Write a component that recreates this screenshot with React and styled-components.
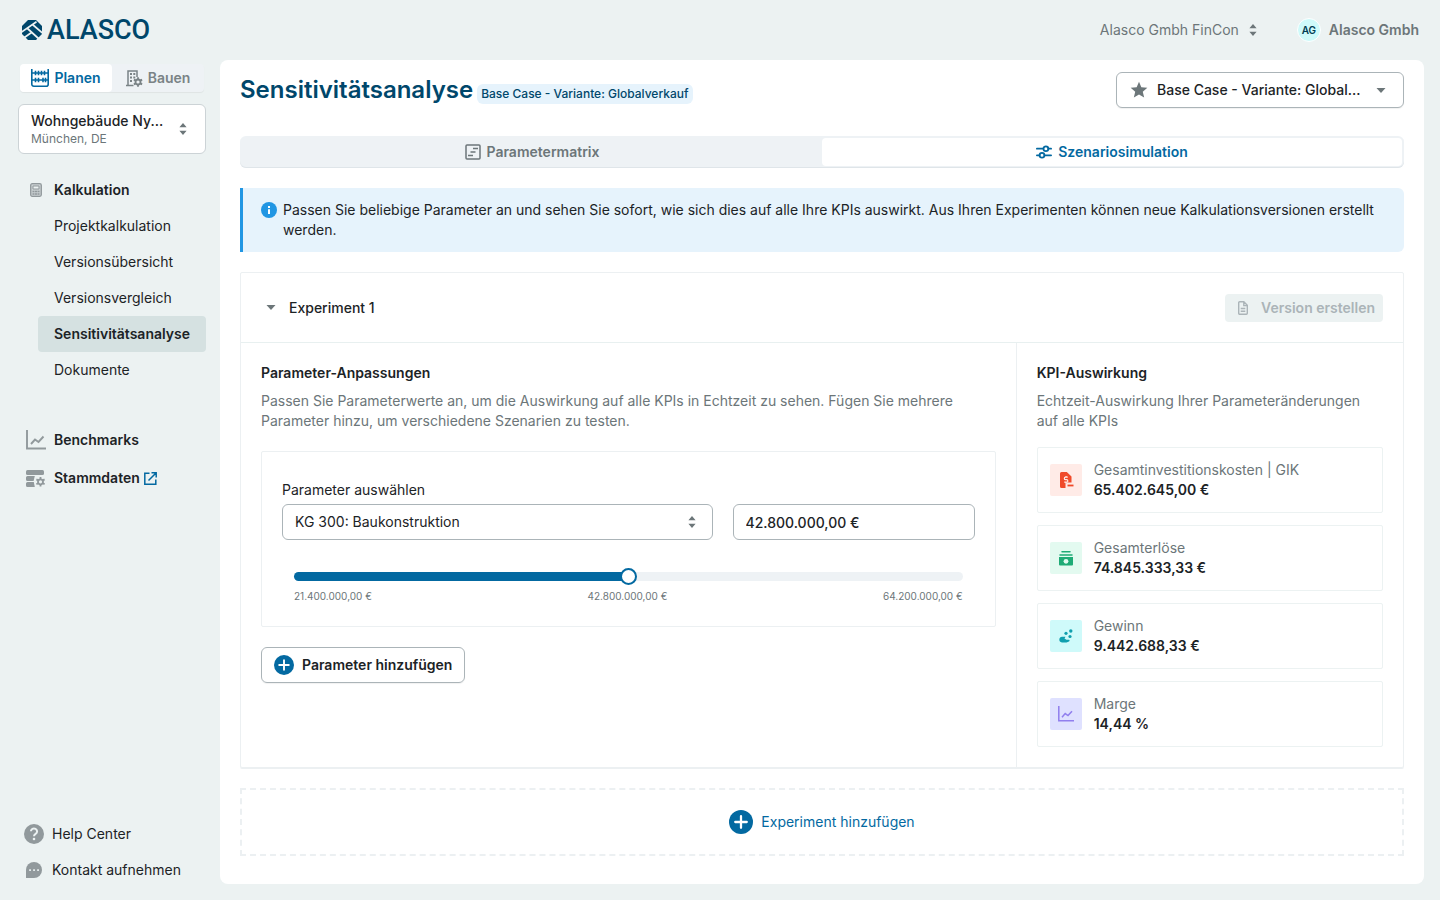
import { useState } from "react";
import styled, { createGlobalStyle } from "styled-components";
import { MdStar } from "react-icons/md";

const GlobalStyle = createGlobalStyle`
  * {
    box-sizing: border-box;
  }

  body {
    margin: 0;
    background: #ecf2f2;
    color: #1c2326;
    font-family: Inter, sans-serif;
    font-size: 14px;
    line-height: 20px;
  }

  button,
  input,
  select {
    font: inherit;
    color: inherit;
  }

  h1,
  h2,
  p,
  ul,
  dl,
  dd {
    margin: 0;
    padding: 0;
  }

  svg {
    display: block;
    flex-shrink: 0;
  }
`;

/* ---------- icons ---------- */

const LogoMark = () => (
  <svg width="20" height="20" viewBox="0 0 20 20" aria-hidden="true">
    <path d="M6 0h8l6 6v8l-6 6H6l-6-6V6z" fill="#00476b" />
    <path
      d="M-1 12.500L14.500 1.700M10.500 4.500L21 13.500M5.500 8.500L17 19M1 18.500L9.500 12.500"
      stroke="#ecf2f2"
      strokeWidth="1.700"
      fill="none"
    />
  </svg>
);

const AbacusIcon = () => (
  <svg width="18" height="18" viewBox="0 0 18 18" fill="none" stroke="currentColor" strokeWidth="1.600" aria-hidden="true">
    <path d="M.8 0v15.200a2 2 0 0 0 2 2h12.400a2 2 0 0 0 2-2V0M.8 4h16.400M.8 11h16.400" />
    <path d="M4.500 1.700v4.600M7.500 1.700v4.600M10.500 1.700v4.600M13.500 1.700v4.600M4.500 8.700v4.600M7.500 8.700v4.600M12 8.700v4.600M14.500 8.700v4.600" />
  </svg>
);

const Gear = ({ x, y }) => (
  <g transform={`translate(${x} ${y})`}>
    <circle r="2.500" fill="none" stroke="currentColor" strokeWidth="1.800" />
    <path
      d="M0-4.700v2M0 4.700v-2M-4.100-2.400l1.800 1M4.100 2.400l-1.800-1M-4.100 2.400l1.800-1M4.100-2.400l-1.800 1"
      stroke="currentColor"
      strokeWidth="1.800"
    />
  </g>
);

const BuildingIcon = () => (
  <svg width="17" height="17" viewBox="0 0 17 17" aria-hidden="true">
    <path d="M2 16V1h9v6M0 15.500h7.500" fill="none" stroke="currentColor" strokeWidth="1.500" />
    <path d="M4 3h2v2H4zM7.300 3h2v2h-2zM4 6.500h2v2H4zM7.300 6.500h2v2h-2zM4 10h2v2H4z" fill="currentColor" />
    <Gear x="12" y="12" />
  </svg>
);

const CalculatorIcon = () => (
  <svg width="12" height="14" viewBox="0 0 12 14" aria-hidden="true">
    <rect x=".7" y=".7" width="10.600" height="12.600" rx="1.500" fill="#c9cfd1" stroke="#91999c" strokeWidth="1.300" />
    <path d="M3 3h6v3H3z" fill="#ecf2f2" stroke="#91999c" />
    <path d="M2.500 8.500h2M5 8.500h2M7.500 8.500h2M2.500 11h2M5 11h2M7.500 11h2" stroke="#91999c" strokeWidth="1.300" />
  </svg>
);

const ChartIcon = ({ size }) => (
  <svg width={size} height={size} viewBox="0 0 20 20" fill="none" stroke="currentColor" strokeWidth="1.900" aria-hidden="true">
    <path d="M1 0v18.500h19" />
    <path d="M5 14l4-4.500 3.500 2.500 5-5.500" />
  </svg>
);

const MasterDataIcon = () => (
  <svg width="20" height="17" viewBox="0 0 20 17" aria-hidden="true">
    <rect width="18" height="5" rx="1.500" fill="currentColor" />
    <path d="M1.500 6h7.300l-1.200 5H1.500A1.500 1.500 0 0 1 0 9.500v-2A1.500 1.500 0 0 1 1.500 6zM1.500 12h6.300l1 5H1.500A1.500 1.500 0 0 1 0 15.500v-2A1.500 1.500 0 0 1 1.500 12z" fill="currentColor" />
    <Gear x="14.500" y="11.800" />
  </svg>
);

const ExternalIcon = () => (
  <svg width="13" height="13" viewBox="0 0 13 13" fill="none" stroke="#0369a1" strokeWidth="1.500" aria-hidden="true">
    <path d="M5.500 1.200H.8v11h11V7.500M7.500.8h4.700v4.700M12 1L4.500 8.500" />
  </svg>
);

const HelpIconDisc = () => (
  <svg width="20" height="20" viewBox="0 0 20 20" aria-hidden="true">
    <circle cx="10" cy="10" r="10" fill="currentColor" />
    <path d="M6.900 7.300a3.100 2.900 0 1 1 4.700 2.500c-1.200.8-1.600 1.200-1.600 2.500" fill="none" stroke="#ecf2f2" strokeWidth="2" />
    <circle cx="10" cy="15" r="1.300" fill="#ecf2f2" />
  </svg>
);

const InfoIcon = () => (
  <svg width="16" height="16" viewBox="0 0 16 16" aria-hidden="true">
    <circle cx="8" cy="8" r="8" fill="#2196e3" />
    <path d="M7 4h2v2H7zM7 7.300h2V12H7z" fill="#fff" />
  </svg>
);

const ChatIcon = () => (
  <svg width="16" height="16" viewBox="0 0 16 16" aria-hidden="true">
    <path d="M8 0a8 8 0 1 1 0 16H0V8a8 8 0 0 1 8-8z" fill="currentColor" />
    <path d="M3.200 7.200h1.700v1.700H3.200zM7.200 7.200h1.700v1.700H7.200zM11.200 7.200h1.700v1.700h-1.700z" fill="#ecf2f2" />
  </svg>
);

const SortIcon = () => (
  <svg width="8" height="12" viewBox="0 0 8 12" fill="#6c7679" aria-hidden="true">
    <path d="M4 0l3.600 4.200H.4zM4 12l3.600-4.200H.4z" />
  </svg>
);

const CaretIcon = () => (
  <svg width="10" height="5" viewBox="0 0 10 5" fill="#6c7679" aria-hidden="true">
    <path d="M.5 0h9L5 5z" />
  </svg>
);

const MatrixIcon = () => (
  <svg width="16" height="16" viewBox="0 0 16 16" fill="none" stroke="currentColor" aria-hidden="true">
    <rect x="1" y="1" width="14" height="14" rx="1" strokeWidth="1.500" />
    <path d="M8 4.500h5M5.500 8h5M3 11.500h5" strokeWidth="1.500" />
  </svg>
);

const SlidersIcon = () => (
  <svg width="16" height="14" viewBox="0 0 16 14" fill="none" stroke="currentColor" strokeWidth="1.800" strokeLinecap="round" aria-hidden="true">
    <path d="M.9 3.700h6.100M12.400 3.700h2.700M.9 10.300h2.500M8.600 10.300h6.500" />
    <circle cx="9.900" cy="3.700" r="2.400" />
    <circle cx="6" cy="10.300" r="2.400" />
  </svg>
);

const FileIcon = () => (
  <svg width="10" height="14" viewBox="0 0 10 14" fill="none" stroke="currentColor" strokeWidth="1.400" aria-hidden="true">
    <path d="M.7 1.700a1 1 0 0 1 1-1h4.100l3.500 3.600v8a1 1 0 0 1-1 1H1.700a1 1 0 0 1-1-1zM5.800 1v3.600h3.500M2.700 7.500h4.600M2.700 10.300h4.600" />
  </svg>
);

const PlusIcon = ({ size }) => (
  <svg width={size} height={size} viewBox="0 0 20 20" aria-hidden="true">
    <circle cx="10" cy="10" r="10" fill="#0369a1" />
    <path d="M10 5.200v9.600M5.200 10h9.600" stroke="#fff" strokeWidth="1.900" strokeLinecap="round" />
  </svg>
);

const CostIcon = () => (
  <svg width="16" height="16" viewBox="0 0 16 16" aria-hidden="true">
    <path d="M3.500 0h5.300L13.500 4.500v6H9.500L7.500 12v4h-4A1.500 1.500 0 0 1 2 14.500v-13A1.500 1.500 0 0 1 3.500 0z" fill="currentColor" />
    <path d="M9.800 5.200H7.600a1.200 1.200 0 0 0 0 2.500h1a1.200 1.200 0 0 1 0 2.500H6.200M8 4v1.200M8 10.200v1.500" fill="none" stroke="#ffebe7" strokeWidth="1.200" />
    <path d="M9.500 13.500h6" stroke="currentColor" strokeWidth="1.800" />
  </svg>
);

const CashIcon = () => (
  <svg width="16" height="16" viewBox="0 0 16 16" aria-hidden="true">
    <path d="M4 1.700h8M2 5h12" stroke="currentColor" strokeWidth="1.500" strokeLinecap="round" />
    <path d="M1 7h14v7.500a1 1 0 0 1-1 1H2a1 1 0 0 1-1-1z" fill="currentColor" />
    <circle cx="8" cy="11.300" r="2.400" fill="#e3faf0" />
  </svg>
);

const ProfitIcon = () => (
  <svg width="16" height="16" viewBox="0 0 16 16" fill="currentColor" aria-hidden="true">
    <circle cx="8" cy="5.300" r="1.600" />
    <circle cx="12.800" cy="3" r="1.700" />
    <circle cx="12" cy="8.500" r="1.600" />
    <path d="M4.500 8.700h3l-1 1.800 2 1.200h2.500c.8 0 .8 1.500 0 1.700L8.500 14.500H4a2.900 2.900 0 0 1 .5-5.800z" />
  </svg>
);

/* ---------- data ---------- */

const subPages = [
  "Projektkalkulation",
  "Versionsübersicht",
  "Versionsvergleich",
  "Sensitivitätsanalyse",
  "Dokumente",
];

const kpis = [
  { label: "Gesamtinvestitionskosten | GIK", value: "65.402.645,00 €", icon: <CostIcon />, bg: "#ffebe7", fg: "#f04a2a" },
  { label: "Gesamterlöse", value: "74.845.333,33 €", icon: <CashIcon />, bg: "#e3faf0", fg: "#1fab76" },
  { label: "Gewinn", value: "9.442.688,33 €", icon: <ProfitIcon />, bg: "#cffafa", fg: "#0f9fae" },
  { label: "Marge", value: "14,44 %", icon: <ChartIcon size={16} />, bg: "#dfe1ff", fg: "#917fee" },
];

const formatEuro = (n) =>
  n.toString().replace(/\B(?=(\d{3})+(?!\d))/g, ".") + ",00 €";

const MIN = 21400000;
const MAX = 64200000;

const App = () => {
  const [amount, setAmount] = useState(42800000);
  const filled = ((amount - MIN) / (MAX - MIN)) * 100;

  return (
    <>
      <GlobalStyle />
      <Page>
        <TopBar>
          <Logo href="#">
            <LogoMark />
            <span>ALASCO</span>
          </Logo>
          <Account>
            <CompanyButton type="button">
              Alasco Gmbh FinCon
              <SortIcon />
            </CompanyButton>
            <UserButton type="button">
              <Avatar>AG</Avatar>
              Alasco Gmbh
            </UserButton>
          </Account>
        </TopBar>

        <Body>
          <Sidebar>
            <ModeSwitch>
              <ModeButton type="button" $active>
                <AbacusIcon />
                Planen
              </ModeButton>
              <ModeButton type="button">
                <BuildingIcon />
                Bauen
              </ModeButton>
            </ModeSwitch>
            <ProjectButton type="button">
              <ProjectText>
                <ProjectName>Wohngebäude Ny...</ProjectName>
                <ProjectPlace>München, DE</ProjectPlace>
              </ProjectText>
              <SortIcon />
            </ProjectButton>

            <Nav>
              <NavItem href="#" $bold>
                <NavIcon>
                  <CalculatorIcon />
                </NavIcon>
                Kalkulation
              </NavItem>
              {subPages.map((page) => (
                <SubItem href="#" key={page} $active={page === "Sensitivitätsanalyse"}>
                  {page}
                </SubItem>
              ))}
            </Nav>
            <LowerNav>
              <NavItem href="#" $bold>
                <NavIcon>
                  <ChartIcon size={20} />
                </NavIcon>
                Benchmarks
              </NavItem>
              <NavItem href="#" $bold>
                <NavIcon>
                  <MasterDataIcon />
                </NavIcon>
                Stammdaten
                <ExternalIcon />
              </NavItem>
            </LowerNav>

            <HelpNav>
              <HelpItem href="#">
                <HelpIcon>
                  <HelpIconDisc />
                </HelpIcon>
                Help Center
              </HelpItem>
              <HelpItem href="#">
                <HelpIcon>
                  <ChatIcon />
                </HelpIcon>
                Kontakt aufnehmen
              </HelpItem>
            </HelpNav>
          </Sidebar>

          <Main>
            <TitleRow>
              <Title>Sensitivitätsanalyse</Title>
              <Badge>Base Case - Variante: Globalverkauf</Badge>
              <VersionButton type="button">
                <MdStar size={20} color="#6c7679" />
                <span>Base Case - Variante: Global...</span>
                <CaretIcon />
              </VersionButton>
            </TitleRow>

            <Tabs>
              <Tab type="button">
                <MatrixIcon />
                Parametermatrix
              </Tab>
              <Tab type="button" $active>
                <SlidersIcon />
                Szenariosimulation
              </Tab>
            </Tabs>

            <Notice>
              <InfoIcon />
              <p>
                Passen Sie beliebige Parameter an und sehen Sie sofort, wie sich
                dies auf alle Ihre KPIs auswirkt. Aus Ihren Experimenten können
                neue Kalkulationsversionen erstellt werden.
              </p>
            </Notice>

            <Experiment>
              <ExperimentHeader>
                <ExperimentToggle type="button">
                  <CaretIcon />
                  Experiment 1
                </ExperimentToggle>
                <CreateButton type="button" disabled>
                  <FileIcon />
                  Version erstellen
                </CreateButton>
              </ExperimentHeader>
              <ExperimentBody>
                <ParameterPane>
                  <PaneTitle>Parameter-Anpassungen</PaneTitle>
                  <PaneText>
                    Passen Sie Parameterwerte an, um die Auswirkung auf alle
                    KPIs in Echtzeit zu sehen. Fügen Sie mehrere Parameter
                    hinzu, um verschiedene Szenarien zu testen.
                  </PaneText>
                  <ParameterCard>
                    <label htmlFor="parameter">Parameter auswählen</label>
                    <Fields>
                      <SelectBox>
                        <Select id="parameter">
                          <option>KG 300: Baukonstruktion</option>
                        </Select>
                        <SortIcon />
                      </SelectBox>
                      <AmountInput
                        aria-label="Parameterwert"
                        value={formatEuro(amount)}
                        readOnly
                      />
                    </Fields>
                    <SliderArea>
                      <Slider
                        type="range"
                        aria-label="Wert anpassen"
                        min={MIN}
                        max={MAX}
                        step={100000}
                        value={amount}
                        onChange={(e) => setAmount(Number(e.target.value))}
                        style={{ "--filled": `${filled}%` }}
                      />
                      <Scale>
                        <span>{formatEuro(MIN)}</span>
                        <span>{formatEuro((MIN + MAX) / 2)}</span>
                        <span>{formatEuro(MAX)}</span>
                      </Scale>
                    </SliderArea>
                  </ParameterCard>
                  <AddParameter type="button">
                    <PlusIcon size={20} />
                    Parameter hinzufügen
                  </AddParameter>
                </ParameterPane>

                <KpiPane>
                  <PaneTitle>KPI-Auswirkung</PaneTitle>
                  <PaneText>
                    Echtzeit-Auswirkung Ihrer Parameteränderungen auf alle KPIs
                  </PaneText>
                  <KpiList>
                    {kpis.map((kpi) => (
                      <KpiCard key={kpi.label}>
                        <KpiIcon $bg={kpi.bg} $fg={kpi.fg}>
                          {kpi.icon}
                        </KpiIcon>
                        <div>
                          <KpiLabel>{kpi.label}</KpiLabel>
                          <KpiValue>{kpi.value}</KpiValue>
                        </div>
                      </KpiCard>
                    ))}
                  </KpiList>
                </KpiPane>
              </ExperimentBody>
            </Experiment>

            <AddExperiment type="button">
              <PlusIcon size={24} />
              Experiment hinzufügen
            </AddExperiment>
          </Main>
        </Body>
      </Page>
    </>
  );
};

export default App;

/* ---------- styles ---------- */

const Page = styled.div`
  display: flex;
  flex-direction: column;
  min-height: 100vh;
`;

const TopBar = styled.header`
  display: flex;
  align-items: center;
  justify-content: space-between;
  height: 60px;
  padding: 0 21px 0 22px;
`;

const Logo = styled.a`
  display: flex;
  align-items: center;
  gap: 5px;
  color: #00476b;
  font-family: Roboto, sans-serif;
  font-size: 27px;
  font-weight: 500;
  line-height: 32px;
  text-decoration: none;
`;

const Account = styled.div`
  display: flex;
  align-items: center;
  gap: 40px;
  color: #6c7679;
`;

const PlainButton = styled.button`
  display: flex;
  align-items: center;
  padding: 0;
  border: none;
  background: none;
  cursor: pointer;
`;

const CompanyButton = styled(PlainButton)`
  gap: 10px;
`;

const UserButton = styled(PlainButton)`
  gap: 8px;
  font-weight: 600;
`;

const Avatar = styled.span`
  display: flex;
  align-items: center;
  justify-content: center;
  width: 24px;
  height: 24px;
  border: 1px solid #fff;
  border-radius: 50%;
  background: #cffafa;
  color: #003d52;
  font-size: 10px;
`;

const Body = styled.div`
  display: flex;
  flex: 1;
  padding: 0 16px 16px 0;
`;

const Sidebar = styled.aside`
  display: flex;
  flex-direction: column;
  width: 220px;
  padding: 4px 14px 0 18px;
`;

const ModeSwitch = styled.div`
  display: flex;
  margin: 0 2px;
  border-radius: 4px;
  background: #eef2f5;
  box-shadow: 0 1px 1px #0000000f;
`;

const ModeButton = styled(PlainButton)`
  flex: 1;
  justify-content: center;
  gap: 5px;
  height: 28px;
  border-radius: 4px;
  background: ${(props) => (props.$active ? "#fff" : "transparent")};
  color: ${(props) => (props.$active ? "#0369a1" : "#7a8386")};
  font-weight: 600;
`;

const ProjectButton = styled(PlainButton)`
  justify-content: space-between;
  gap: 12px;
  height: 50px;
  margin-top: 12px;
  padding: 0 18px 0 12px;
  border: 1px solid #ccd3d6;
  border-radius: 6px;
  background: #fff;
  text-align: left;
`;

const ProjectText = styled.span`
  flex: 1;
`;

const ProjectName = styled.span`
  display: block;
  font-weight: 500;
  line-height: 20px;
  white-space: nowrap;
`;

const ProjectPlace = styled.span`
  display: block;
  color: #6c7679;
  font-size: 12px;
  line-height: 16px;
`;

const Nav = styled.nav`
  display: flex;
  flex-direction: column;
  margin-top: 18px;
`;

const LowerNav = styled(Nav)`
  gap: 2px;
  margin-top: 34px;
`;

const NavItem = styled.a`
  display: flex;
  align-items: center;
  height: 36px;
  color: inherit;
  font-weight: ${(props) => (props.$bold ? 600 : 400)};
  text-decoration: none;

  > svg {
    margin-left: 4px;
  }
`;

const NavIcon = styled.span`
  display: flex;
  justify-content: center;
  width: 36px;
  color: #91999c;
`;

const SubItem = styled(NavItem)`
  margin-left: 20px;
  padding-left: 16px;
  border-radius: 4px;
  background: ${(props) => (props.$active ? "#d5e1e1" : "transparent")};
  font-weight: ${(props) => (props.$active ? 600 : 400)};
`;

const HelpNav = styled(Nav)`
  margin-top: auto;
  margin-bottom: -4px;
`;

const HelpItem = styled(NavItem)`
  gap: 2px;
`;

const HelpIcon = styled(NavIcon)`
  width: 32px;
`;

const Main = styled.main`
  flex: 1;
  min-width: 0;
  padding: 12px 20px 28px;
  border-radius: 8px;
  background: #fff;
`;

const TitleRow = styled.div`
  display: flex;
  align-items: center;
  gap: 4px;
`;

const Title = styled.h1`
  color: #00476b;
  font-size: 24px;
  font-weight: 600;
  line-height: 36px;
`;

const Badge = styled.span`
  margin-top: 8px;
  padding: 0 4px;
  border-radius: 6px;
  background: #e6f3fc;
  color: #00476b;
  font-size: 12px;
  font-weight: 500;
`;

const VersionButton = styled(PlainButton)`
  gap: 8px;
  width: 288px;
  height: 36px;
  margin-left: auto;
  padding: 0 17px 0 12px;
  border: 1px solid #abb4b8;
  border-radius: 6px;
  background: #fff;
  box-shadow: 0 1px 1px #0000000f;
  font-weight: 500;
  text-align: left;

  span {
    flex: 1;
    white-space: nowrap;
  }
`;

const Tabs = styled.div`
  display: flex;
  margin-top: 28px;
  padding: 2px;
  border-radius: 6px;
  background: #eef2f5;
  box-shadow: inset 0 -1px 0 #dfe5e9;
`;

const Tab = styled(PlainButton)`
  flex: 1;
  justify-content: center;
  gap: 6px;
  height: 28px;
  border-radius: 4px;
  background: ${(props) => (props.$active ? "#fff" : "transparent")};
  color: ${(props) => (props.$active ? "#0369a1" : "#6c7679")};
  font-weight: 600;
`;

const Notice = styled.div`
  display: flex;
  gap: 6px;
  margin-top: 20px;
  padding: 12px 18px;
  border-left: 3px solid #2196e3;
  border-radius: 0 6px 6px 0;
  background: #e6f3fc;

  svg {
    margin-top: 2px;
  }
`;

const Experiment = styled.section`
  margin-top: 20px;
  border: 1px solid #ecf0f2;
  border-radius: 2px;
  box-shadow: 0 1px 0 #ecf0f2;
`;

const ExperimentHeader = styled.div`
  display: flex;
  align-items: center;
  justify-content: space-between;
  height: 70px;
  padding: 0 20px 0 25px;
  border-bottom: 1px solid #e8f0f0;
`;

const ExperimentToggle = styled(PlainButton)`
  gap: 13px;
  font-weight: 500;
`;

const CreateButton = styled(PlainButton)`
  gap: 13px;
  height: 28px;
  padding: 0 8px 0 13px;
  border-radius: 4px;
  background: #ecf2f2;
  color: #abb4b8;
  font-weight: 600;
  cursor: default;
`;

const ExperimentBody = styled.div`
  display: grid;
  grid-template-columns: 2fr 1fr;
`;

const ParameterPane = styled.div`
  padding: 20px;
`;

const KpiPane = styled.div`
  padding: 20px;
  border-left: 1px solid #ecf0f2;
`;

const PaneTitle = styled.h2`
  font-size: 14px;
  font-weight: 600;
  line-height: 20px;
`;

const PaneText = styled.p`
  margin-top: 8px;
  color: #6c7679;
`;

const ParameterCard = styled.div`
  margin-top: 20px;
  padding: 28px 20px 22px;
  border: 1px solid #ecf0f2;
  border-radius: 2px;
`;

const Fields = styled.div`
  display: grid;
  grid-template-columns: 16fr 9fr;
  gap: 20px;
  margin-top: 4px;
`;

const SelectBox = styled.div`
  position: relative;

  svg {
    position: absolute;
    top: 12px;
    right: 17px;
    pointer-events: none;
  }
`;

const Select = styled.select`
  display: block;
  width: 100%;
  height: 36px;
  padding: 0 12px;
  border: 1px solid #abb4b8;
  border-radius: 6px;
  appearance: none;
  background: #fff;
`;

const AmountInput = styled.input`
  width: 100%;
  height: 36px;
  padding: 0 12px;
  border: 1px solid #abb4b8;
  border-radius: 6px;
  font-weight: 500;
`;

const SliderArea = styled.div`
  padding: 28px 12px 0;
`;

const Slider = styled.input`
  display: block;
  width: 100%;
  height: 17px;
  margin: 0;
  appearance: none;
  background: none;

  &::-webkit-slider-runnable-track {
    height: 9px;
    border-radius: 5px;
    background: linear-gradient(
      to right,
      #0369a1 var(--filled),
      #eef2f5 var(--filled)
    );
  }

  &::-webkit-slider-thumb {
    width: 17px;
    height: 17px;
    margin-top: -4px;
    border: 2px solid #0369a1;
    border-radius: 50%;
    appearance: none;
    background: #fff;
  }
`;

const Scale = styled.div`
  display: flex;
  justify-content: space-between;
  margin-top: 3px;
  color: #6c7679;
  font-size: 10px;
  line-height: 16px;
`;

const AddParameter = styled(PlainButton)`
  gap: 8px;
  height: 36px;
  margin-top: 20px;
  padding: 0 12px;
  border: 1px solid #abb4b8;
  border-radius: 6px;
  box-shadow: 0 1px 1px #0000000f;
  font-weight: 600;
`;

const KpiList = styled.dl`
  display: flex;
  flex-direction: column;
  gap: 12px;
  margin-top: 16px;
`;

const KpiCard = styled.div`
  display: flex;
  align-items: center;
  gap: 12px;
  padding: 12px;
  border: 1px solid #ecf2f2;
  border-radius: 2px;
`;

const KpiIcon = styled.span`
  display: flex;
  align-items: center;
  justify-content: center;
  width: 32px;
  height: 32px;
  border-radius: 2px;
  background: ${(props) => props.$bg};
  color: ${(props) => props.$fg};
`;

const KpiLabel = styled.dt`
  color: #6c7679;
`;

const KpiValue = styled.dd`
  font-weight: 600;
`;

const AddExperiment = styled(PlainButton)`
  justify-content: center;
  gap: 8px;
  width: 100%;
  height: 68px;
  margin-top: 20px;
  border: 2px dashed #ecf0f2;
  color: #0369a1;
`;
